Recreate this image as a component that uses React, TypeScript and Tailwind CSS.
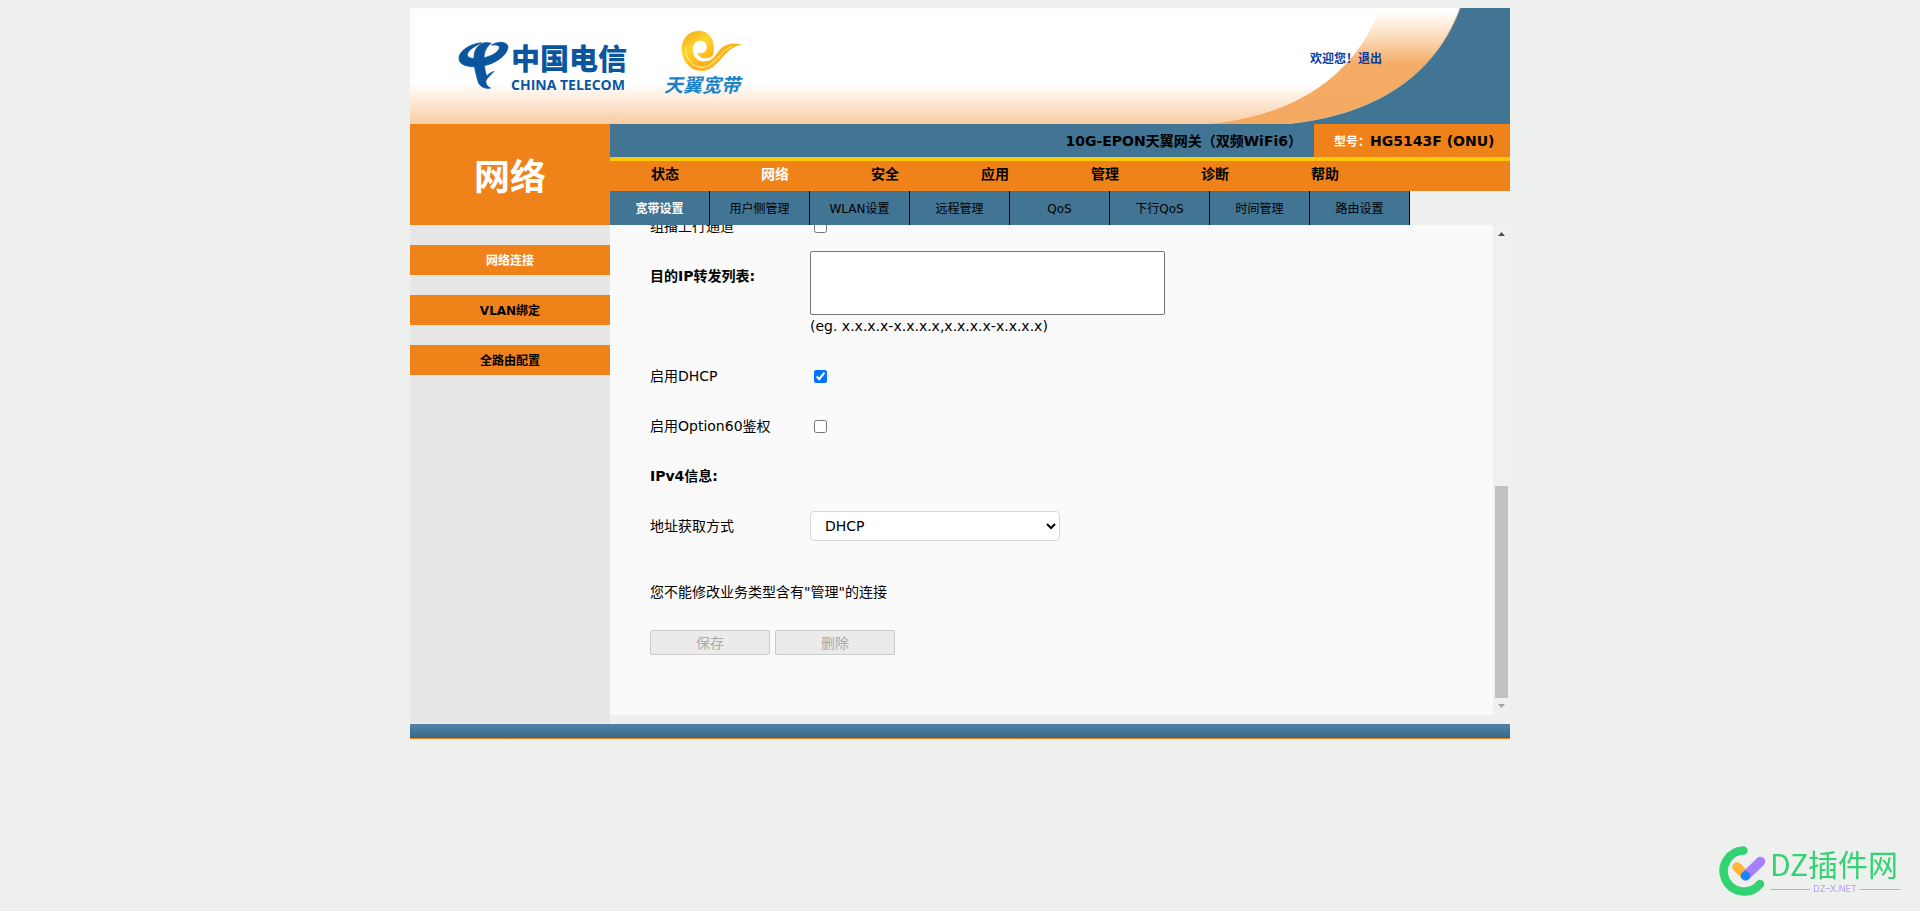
import { useState } from 'react';
import type { ReactNode } from 'react';

const menus = ['状态', '网络', '安全', '应用', '管理', '诊断', '帮助'];
const subMenus = ['宽带设置', '用户侧管理', 'WLAN设置', '远程管理', 'QoS', '下行QoS', '时间管理', '路由设置'];
const sideMenus = ['网络连接', 'VLAN绑定', '全路由配置'];

function TelecomLogo() {
  return (
    <svg viewBox="0 0 180 60" className="h-[60px] w-[180px] shrink-0" aria-label="中国电信 CHINA TELECOM">
      <g fill="#0b559f" stroke="#0b559f" strokeWidth="2" transform="scale(0.3333)">
        <path d="M84 20 C50 22 14 44 15 68 C17 94 60 96 96 88 C135 78 162 52 162 32 C160 16 130 14 112 28 C126 25 138 28 136 36 C132 50 110 62 84 66 C56 70 40 66 40 56 C42 42 64 30 84 20Z" />
        <path d="M112 22 C82 12 60 36 60 62 C58 90 68 124 74 142 C82 156 100 160 110 156 C101 152 94 144 96 134 C100 124 112 116 120 106 C110 110 104 114 98 120 C92 104 90 84 90 64 C92 44 98 32 112 22Z" />
      </g>
      <g fill="#0b559f">
        <text x="57" y="34" className="font-['Noto_Sans_CJK_SC',sans-serif] text-[29px] font-black">中国电信</text>
        <text x="57" y="54" className="font-['Open_Sans',sans-serif] text-[14px] font-bold">CHINA TELECOM</text>
      </g>
    </svg>
  );
}

function TianyiLogo() {
  return (
    <svg viewBox="0 0 90 76" className="h-[76px] w-[90px] shrink-0" aria-label="天翼宽带">
      <defs>
        <linearGradient id="swirl" x1="0" y1="0" x2="1" y2="1">
          <stop offset="0" stopColor="#f7a21c" />
          <stop offset="0.3" stopColor="#ffd52e" />
          <stop offset="0.6" stopColor="#fbb01c" />
          <stop offset="1" stopColor="#ffd83a" />
        </linearGradient>
      </defs>
      <g transform="scale(0.3333)">
        <path
          fill="url(#swirl)"
          d="M160 92 C168 48 148 18 112 20 C78 24 60 54 66 88 C72 120 96 141 125 141 C178 141 190 68 245 62 C218 53 192 62 178 78 C166 96 154 112 136 112 C104 116 94 84 100 66 C106 46 134 44 140 64 C144 80 130 92 112 86 C116 104 144 110 160 92Z"
        />
        <path fill="none" stroke="#fff1a0" strokeWidth="3" d="M76 70 C76 104 98 131 128 130 C164 128 182 78 216 67" />
      </g>
      <text x="4" y="68" fill="#1c83c8" className="font-['Noto_Sans_CJK_SC',sans-serif] text-[19px] font-bold italic">天翼宽带</text>
    </svg>
  );
}

function HeaderCurve() {
  return (
    <svg viewBox="0 0 300 116" className="absolute top-0 right-0 h-full w-[300px]">
      <defs>
        <linearGradient id="curve" x1="0" y1="0" x2="0" y2="1">
          <stop offset="0.03" stopColor="#ffffff" />
          <stop offset="0.25" stopColor="#fadcbc" />
          <stop offset="0.48" stopColor="#f5ac66" />
          <stop offset="1" stopColor="#f4a961" />
        </linearGradient>
      </defs>
      <path fill="url(#curve)" d="M170 0 C150 55 100 106 0 116 L300 116 L300 0Z" />
      <path fill="#427493" d="M250 0 C230 55 180 106 75 116 L300 116 L300 0Z" />
      <path fill="none" stroke="#d8b793" d="M250 0 C230 55 180 106 75 116" />
    </svg>
  );
}

function Row({ label, htmlFor, children }: { label: string; htmlFor: string; children?: ReactNode }) {
  return (
    <div className="flex h-[50px] shrink-0 items-center">
      <label htmlFor={htmlFor} className="w-40 shrink-0">{label}</label>
      {children}
    </div>
  );
}

function ScrollBar() {
  return (
    <div className="flex w-[17px] shrink-0 flex-col items-center bg-[#f0f0f0]">
      <svg viewBox="0 0 17 17" className="h-[17px] w-[17px]">
        <path fill="#505050" d="M5 11h7L8.500 7Z" />
      </svg>
      <div className="grow" />
      <div className="h-[212px] w-[13px] bg-[#c1c1c1]" />
      <svg viewBox="0 0 17 17" className="h-[17px] w-[17px]">
        <path fill="#a3a3a3" d="M5 6h7L8.500 10Z" />
      </svg>
    </div>
  );
}

function Watermark() {
  return (
    <div className="fixed right-5 bottom-3.5 flex items-center">
      <svg viewBox="0 0 52 52" className="h-[52px] w-[52px]">
        <path fill="none" stroke="#33d375" strokeWidth="8.500" strokeLinecap="round" d="M25.500 5.500 A20.500 20.500 0 1 0 42 39" />
        <path stroke="#ffb43a" strokeWidth="9.500" strokeLinecap="round" d="M19 22l8 8" />
        <path stroke="#a580ff" strokeWidth="9.500" strokeLinecap="round" d="M42.500 16.500L27.500 31" />
        <path fill="#1684fc" d="M27.500 25.200l4.200 3.200a4.700 4.700 0 1 1-8.400 0Z" />
      </svg>
      <div className="w-[130px]">
        <div className="font-['Noto_Sans_CJK_SC',sans-serif] text-[30px] leading-8 whitespace-nowrap text-[#33d375]">DZ插件网</div>
        <div className="mt-1 flex items-center gap-[3px] text-[#b39cf7]">
          <span className="h-px grow bg-[#b9a6f8]" />
          <span className="font-['Inter',sans-serif] text-[9px] leading-3">DZ–X.NET</span>
          <span className="h-px grow bg-[#b9a6f8]" />
        </div>
      </div>
    </div>
  );
}

export default function App() {
  const [multicast, setMulticast] = useState(false);
  const [dhcp, setDhcp] = useState(true);
  const [option60, setOption60] = useState(false);

  return (
    <div className="min-h-screen bg-[#eef0ed] pt-2 font-['DejaVu_Sans','Noto_Sans_CJK_SC',sans-serif] text-sm text-black">
      <div className="mx-auto w-full max-w-[1100px]">
        {/* Banner */}
        <header className="relative flex h-[116px] items-start bg-linear-to-b from-white from-65% to-[#f8cca2]">
          <HeaderCurve />
          <div className="flex grow pl-11">
            <div className="pt-7"><TelecomLogo /></div>
            <div className="pt-4 pl-[26px]"><TianyiLogo /></div>
          </div>
          <div className="relative mt-10 mr-32 text-xs leading-[22px] font-bold text-[#0a3a9c]">
            欢迎您！<a href="#logout">退出</a>
          </div>
        </header>

        {/* Title and menus */}
        <div className="flex">
          <h1 className="flex h-[101px] w-[200px] shrink-0 items-center justify-center bg-[#ef8219] pt-1.5 text-4xl font-bold text-white">网络</h1>
          <div className="min-w-0 grow">
            <div className="flex h-[33px] bg-[#427493] leading-[35px] font-bold">
              <div className="grow pr-3 text-right">10G-EPON天翼网关（双频WiFi6）</div>
              <div className="w-[196px] shrink-0 bg-[#ef8219] pl-5 whitespace-nowrap">
                <span className="text-xs text-white">型号：</span>HG5143F (ONU)
              </div>
            </div>
            <nav className="flex h-[34px] border-t-4 border-[#fdc900] bg-[#ef8219] leading-[26px] font-bold">
              {menus.map((m) => (
                <a key={m} href="#menu" className={`w-[110px] text-center ${m === '网络' ? 'text-white' : ''}`}>{m}</a>
              ))}
            </nav>
            <nav className="flex h-[34px] text-xs leading-9">
              {subMenus.map((m) => (
                <a
                  key={m}
                  href="#submenu"
                  className={`w-[100px] border-r border-black bg-[#427493] text-center ${m === '宽带设置' ? 'font-bold text-white' : ''}`}
                >
                  {m}
                </a>
              ))}
            </nav>
          </div>
        </div>

        <div className="flex">
          <aside className="flex h-[498px] w-[200px] shrink-0 flex-col gap-5 bg-[#e6e6e6] pt-5 text-xs leading-8 font-bold">
            {sideMenus.map((m) => (
              <a key={m} href="#side" className={`h-[30px] bg-[#ef8219] text-center ${m === '网络连接' ? 'text-white' : ''}`}>{m}</a>
            ))}
          </aside>

          {/* Scrolled to the bottom, so the first row is cut by the menu */}
          <main className="flex h-[490px] min-w-0 grow bg-[#fafafa]">
            <form className="flex grow flex-col justify-end overflow-hidden pb-[60px] pl-10">
              <Row label="组播上行通道" htmlFor="multicast">
                <input id="multicast" type="checkbox" className="ml-1 h-[13px] w-[13px]" checked={multicast} onChange={(e) => setMulticast(e.target.checked)} />
              </Row>
              <div className="flex h-[100px] shrink-0 items-start">
                <label htmlFor="iplist" className="w-40 shrink-0 leading-[50px] font-bold">目的IP转发列表:</label>
                <div>
                  <textarea id="iplist" className="block h-16 w-[355px] resize-none rounded-xs border border-[#767676] bg-white" />
                  <p className="leading-[22px]">(eg. x.x.x.x-x.x.x.x,x.x.x.x-x.x.x.x)</p>
                </div>
              </div>
              <Row label="启用DHCP" htmlFor="dhcp">
                <input id="dhcp" type="checkbox" className="ml-1 h-[13px] w-[13px]" checked={dhcp} onChange={(e) => setDhcp(e.target.checked)} />
              </Row>
              <Row label="启用Option60鉴权" htmlFor="option60">
                <input id="option60" type="checkbox" className="ml-1 h-[13px] w-[13px]" checked={option60} onChange={(e) => setOption60(e.target.checked)} />
              </Row>
              <h2 className="h-[50px] shrink-0 leading-[50px] font-bold">IPv4信息:</h2>
              <Row label="地址获取方式" htmlFor="addrmode">
                <select id="addrmode" className="h-[30px] w-[250px] rounded-sm border border-[#d8d8d8] bg-white pl-2.5">
                  <option>DHCP</option>
                  <option>Static</option>
                  <option>PPPoE</option>
                </select>
              </Row>
              <p className="mt-4 h-[63px] shrink-0 leading-[50px]">您不能修改业务类型含有"管理"的连接</p>
              <div className="flex shrink-0 gap-[5px]">
                <button type="button" disabled className="h-[25px] w-[120px] rounded-xs border border-[#cbcbcb] bg-[#ebebeb] leading-5 text-[#aaaaaa]">保存</button>
                <button type="button" disabled className="h-[25px] w-[120px] rounded-xs border border-[#cbcbcb] bg-[#ebebeb] leading-5 text-[#aaaaaa]">删除</button>
              </div>
            </form>
            <ScrollBar />
          </main>
        </div>

        <footer className="mt-px h-[15px] border-b border-[#e07f1f] bg-linear-to-b from-[#5183ab] to-[#3c6883]" />
      </div>
      <Watermark />
    </div>
  );
}
